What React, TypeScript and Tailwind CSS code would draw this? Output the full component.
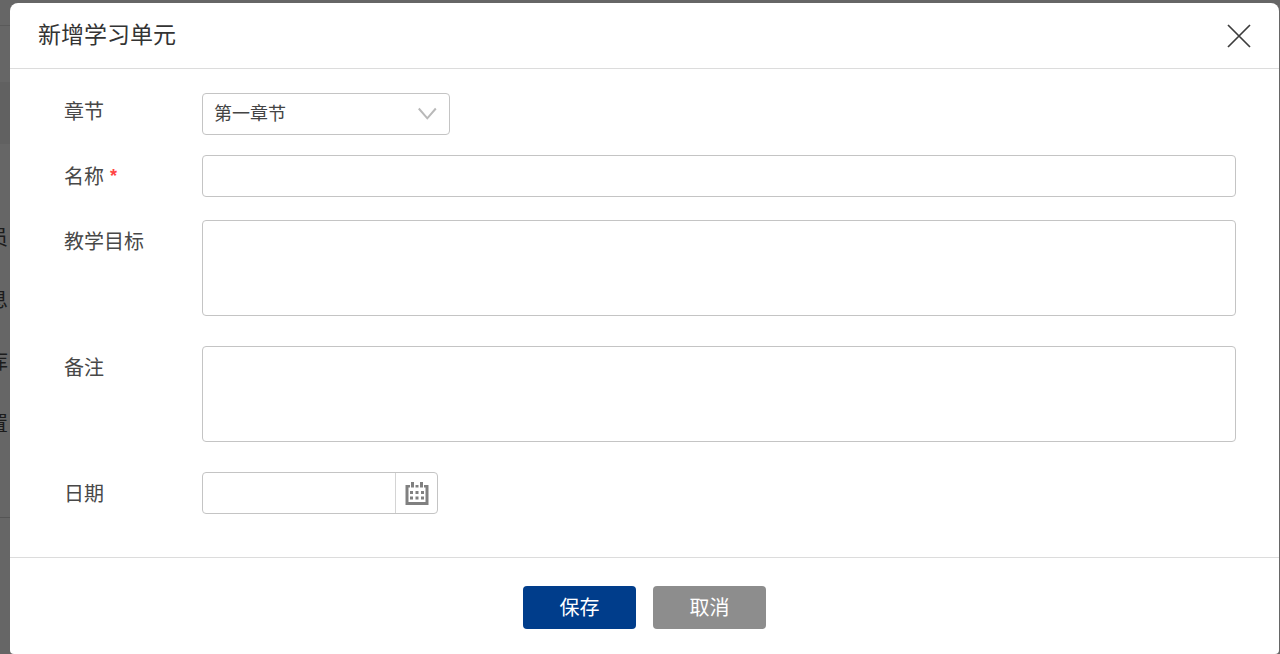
import { useState } from 'react';
import type { FormEvent, ReactNode } from 'react';

const MENU = ['员', '息', '库', '置'];

const FIELD = 'rounded border border-[#c4c4c4] bg-white text-lg text-[#444] outline-none focus:border-[#003d8b]';

function CloseIcon() {
  return (
    <svg width="24" height="24" viewBox="0 0 24 24" fill="none" stroke="#3c3c3c" strokeWidth="1.7" aria-hidden="true">
      <path d="M1 1L23 23M23 1L1 23" />
    </svg>
  );
}

function ChevronIcon() {
  return (
    <svg
      className="pointer-events-none absolute top-3.5 right-3"
      width="20"
      height="14"
      viewBox="0 0 20 14"
      fill="none"
      stroke="#b9b9b9"
      strokeWidth="2"
      aria-hidden="true"
    >
      <path d="M0.8 1.5L9.3 11.3L17.8 1.5" />
    </svg>
  );
}

function CalendarIcon() {
  return (
    <svg width="24" height="24" viewBox="0 0 24 24" fill="#808080" aria-hidden="true">
      <path d="M0.5 4H5V6.5H3.5V21H20.5V6.5H19V4H23.5V24H0.5Z" />
      <path d="M6 1H9V6.5H6ZM15 1H18V6.5H15ZM10.5 4H13.5V6.5H10.5Z" />
      <path d="M5 10h3v3h-3zM10.5 10h3v3h-3zM16 10h3v3h-3zM5 15.5h3v3h-3zM10.5 15.5h3v3h-3zM16 15.5h3v3h-3z" />
    </svg>
  );
}

type RowProps = {
  id: string;
  label: string;
  required?: boolean;
  className?: string;
  children: ReactNode;
};

function Row({ id, label, required, className = '', children }: RowProps) {
  return (
    <div className={`flex items-start ${className}`}>
      <label htmlFor={id} className="w-[138px] shrink-0 text-xl leading-[44px] text-[#484848]">
        {label}
        {required && <span className="ml-1.5 align-[2px] text-lg leading-none font-bold text-[#f44]">*</span>}
      </label>
      <div className="min-w-0 flex-1">{children}</div>
    </div>
  );
}

function Backdrop() {
  return (
    <aside className="flex w-2.5 shrink-0 flex-col overflow-hidden text-xl text-[#1c1c1c]">
      <div className="h-[26px] border-b border-[#5a5a5a]" />
      <div className="h-14" />
      <div className="h-[62px] bg-[#616161]" />
      <ul className="mt-[63px] flex h-[311px] flex-col border-b border-[#555]">
        {MENU.map((item) => (
          <li key={item} className="flex h-[62px] items-center justify-end pr-0.5">
            {item}
          </li>
        ))}
      </ul>
    </aside>
  );
}

export default function App() {
  const [chapter, setChapter] = useState('1');
  const [name, setName] = useState('');
  const [goal, setGoal] = useState('');
  const [remark, setRemark] = useState('');
  const [date, setDate] = useState('');

  const handleSubmit = (e: FormEvent) => {
    e.preventDefault();
  };

  return (
    <div className="flex min-h-screen bg-[#666] font-['Liberation_Sans','Noto_Sans_CJK_SC',sans-serif]">
      <Backdrop />
      <section
        role="dialog"
        aria-labelledby="dialog-title"
        className="mt-[3px] mr-px flex min-w-0 flex-1 flex-col rounded-t-lg rounded-b-sm bg-white"
      >
        <header className="flex h-[66px] items-center justify-between border-b border-[#dcdcdc] px-7">
          <h2 id="dialog-title" className="pb-0.5 text-[23px] leading-8 text-[#333]">
            新增学习单元
          </h2>
          <button type="button" aria-label="关闭">
            <CloseIcon />
          </button>
        </header>

        <form onSubmit={handleSubmit} className="flex flex-1 flex-col">
          <div className="border-b border-[#dcdcdc] pt-[21px] pr-[43px] pb-[41px] pl-[54px]">
            <Row id="chapter" label="章节" className="mb-5">
              <div className="relative mt-[3px] w-[248px]">
                <select
                  id="chapter"
                  value={chapter}
                  onChange={(e) => setChapter(e.target.value)}
                  className={`block h-[42px] w-full appearance-none pr-10 pl-[11px] ${FIELD}`}
                >
                  <option value="1">第一章节</option>
                </select>
                <ChevronIcon />
              </div>
            </Row>
            <Row id="name" label="名称" required className="mb-[21px]">
              <input
                id="name"
                type="text"
                required
                value={name}
                onChange={(e) => setName(e.target.value)}
                className={`block h-[42px] w-full px-3 ${FIELD}`}
              />
            </Row>
            <Row id="goal" label="教学目标" className="mb-[30px]">
              <textarea
                id="goal"
                value={goal}
                onChange={(e) => setGoal(e.target.value)}
                className={`block h-24 w-full resize-none px-3 py-2 ${FIELD}`}
              />
            </Row>
            <Row id="remark" label="备注" className="mb-[30px]">
              <textarea
                id="remark"
                value={remark}
                onChange={(e) => setRemark(e.target.value)}
                className={`block h-24 w-full resize-none px-3 py-2 ${FIELD}`}
              />
            </Row>
            <Row id="date" label="日期">
              <div className="flex h-[42px] w-[236px] overflow-hidden rounded border border-[#c4c4c4]">
                <input
                  id="date"
                  type="text"
                  value={date}
                  onChange={(e) => setDate(e.target.value)}
                  className="min-w-0 flex-1 px-3 text-lg text-[#444] outline-none"
                />
                <button
                  type="button"
                  aria-label="选择日期"
                  className="flex w-[42px] items-center justify-center border-l border-[#d4d4d4]"
                >
                  <CalendarIcon />
                </button>
              </div>
            </Row>
          </div>

          <footer className="flex justify-center gap-[17px] pt-7 pb-6 text-xl text-white">
            <button type="submit" className="h-[43px] w-[113px] rounded bg-[#003d8b]">
              保存
            </button>
            <button type="button" className="h-[43px] w-[113px] rounded bg-[#8d8d8d]">
              取消
            </button>
          </footer>
        </form>
      </section>
    </div>
  );
}
